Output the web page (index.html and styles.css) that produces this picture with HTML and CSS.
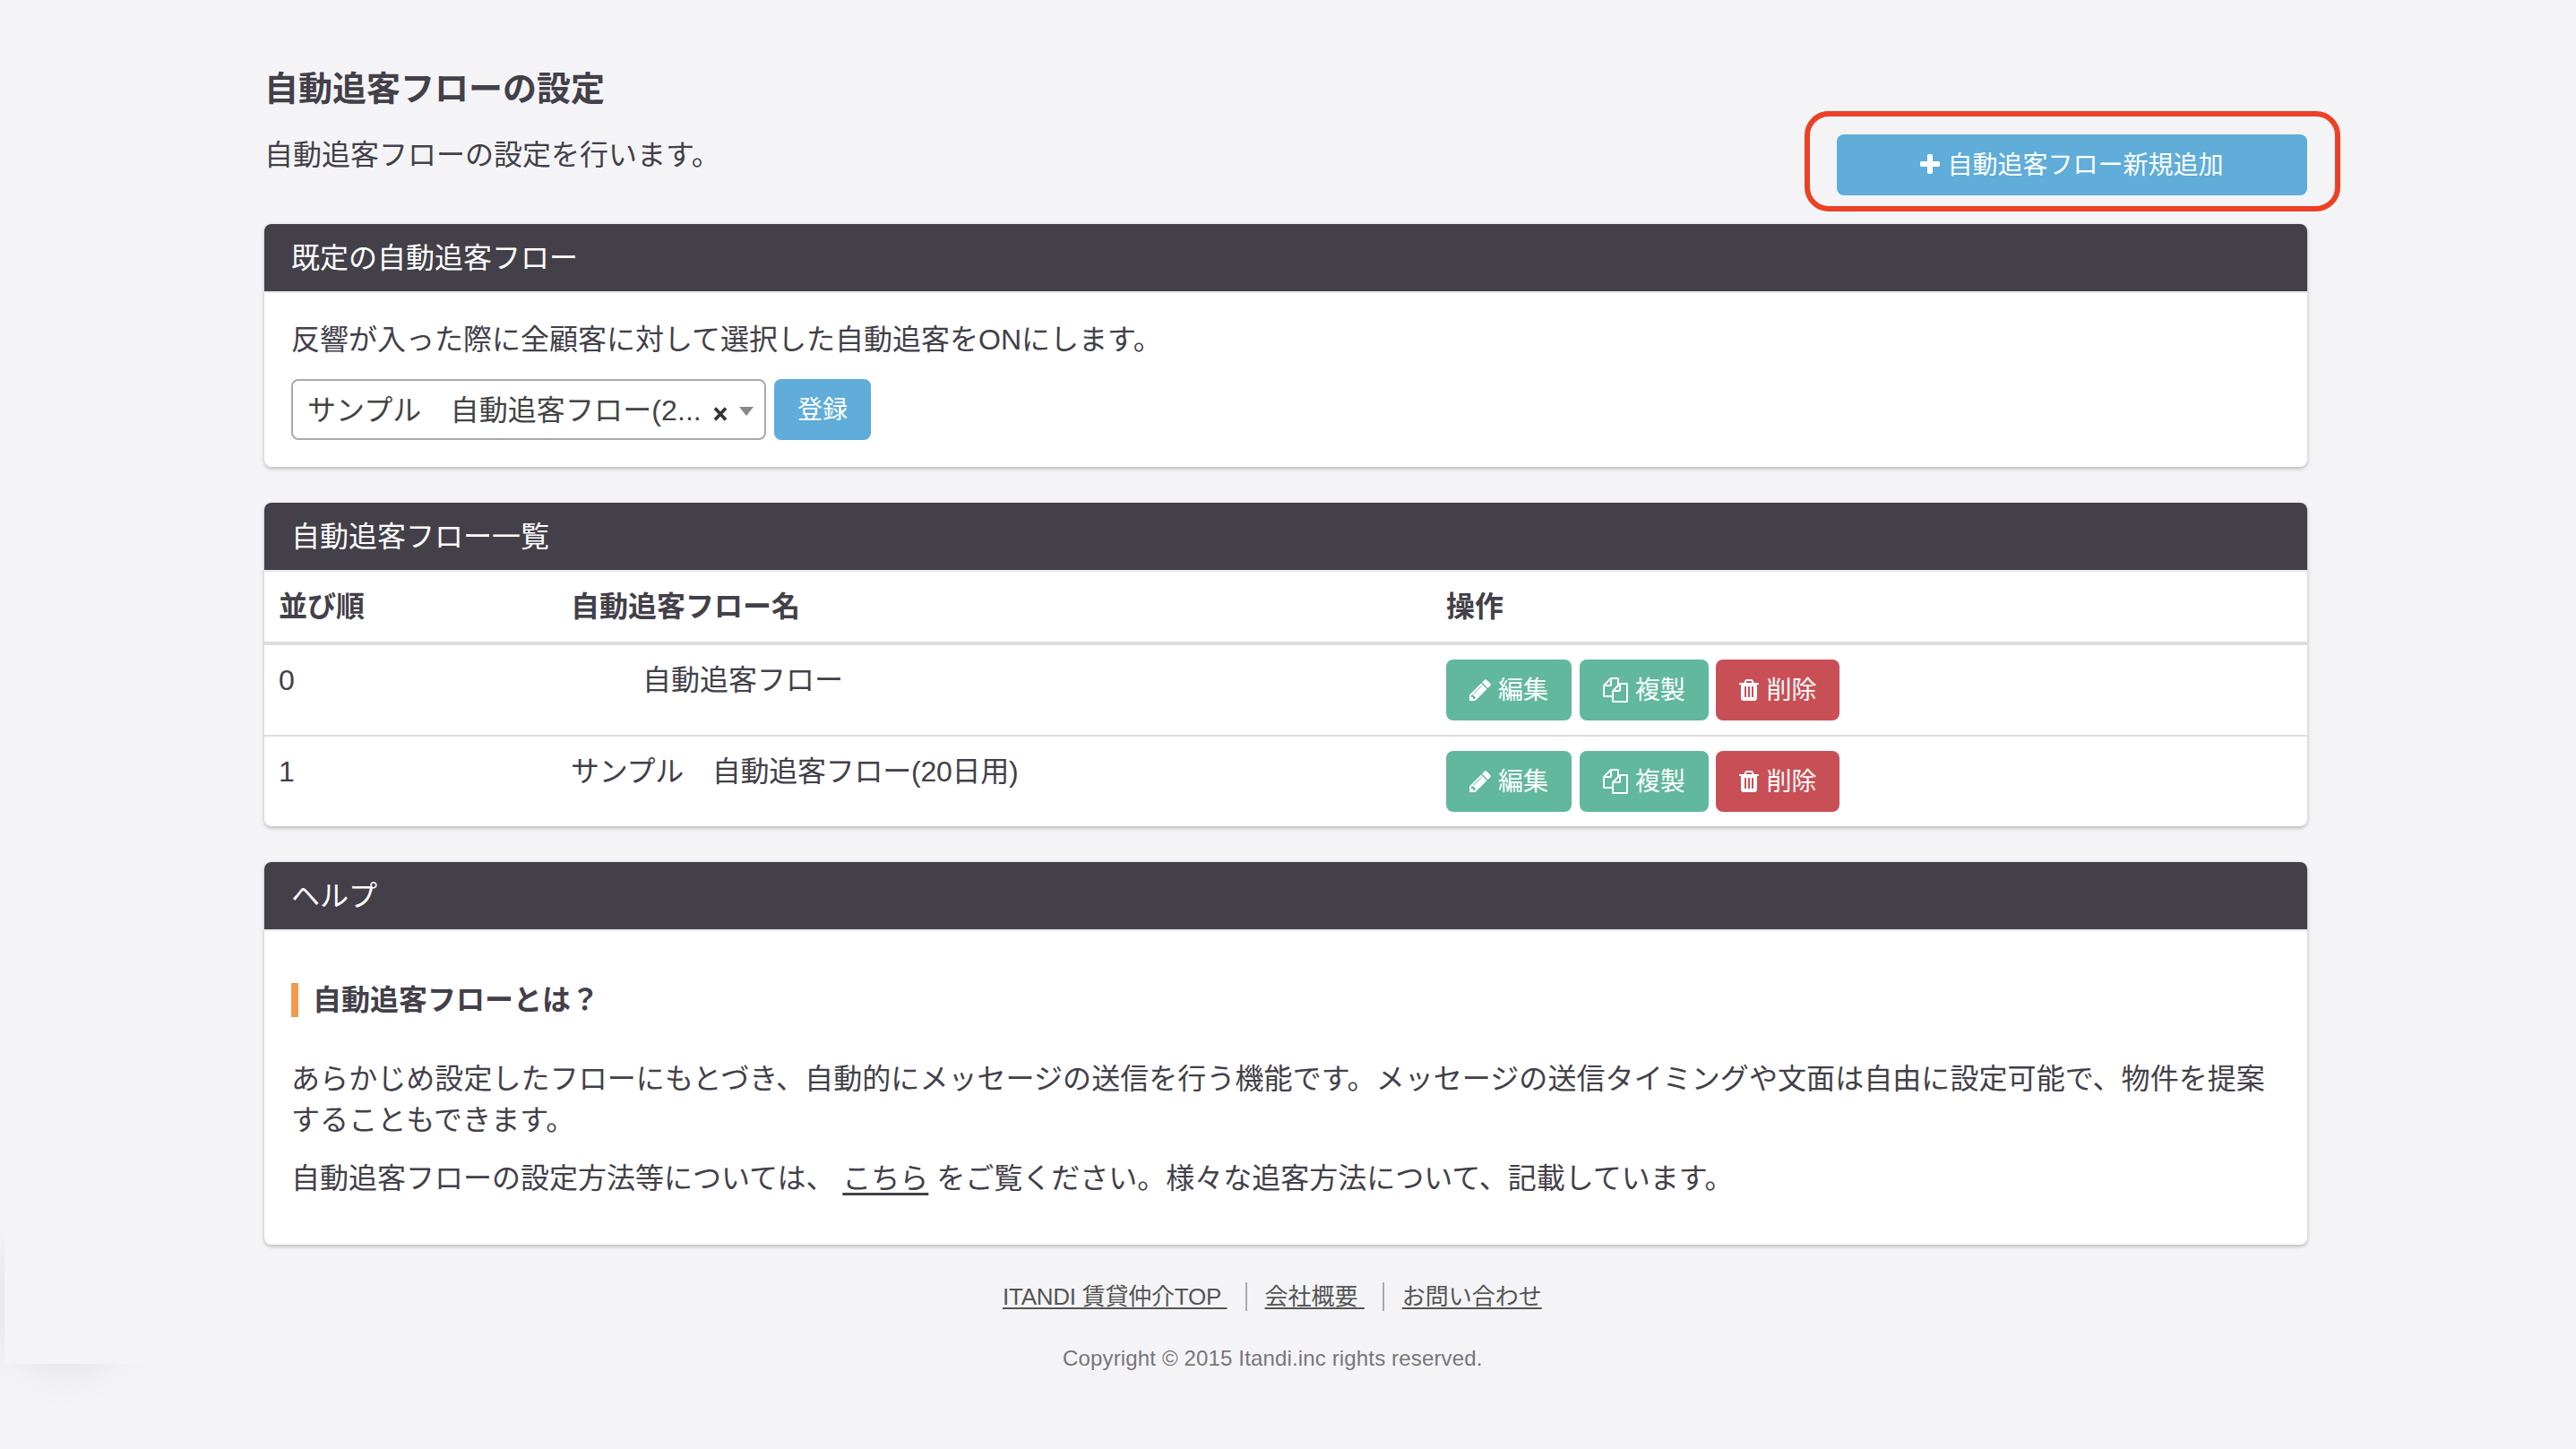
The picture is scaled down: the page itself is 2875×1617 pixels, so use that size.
FILE: index.html
```html
<!DOCTYPE html>
<html lang="ja">
<head>
<meta charset="utf-8">
<title>自動追客フローの設定</title>
<link rel="stylesheet" href="styles.css">
</head>
<body>
<svg class="sprite" aria-hidden="true">
  <symbol id="plus" viewBox="192 0 1408 1792"><path d="M1600 736v192q0 40-28 68t-68 28h-416v416q0 40-28 68t-68 28h-192q-40 0-68-28t-28-68v-416h-416q-40 0-68-28t-28-68v-192q0-40 28-68t68-28h416v-416q0-40 28-68t68-28h192q40 0 68 28t28 68v416h416q40 0 68 28t28 68z"/></symbol>
  <symbol id="pencil" viewBox="128 0 1536 1792"><path d="M491 1536l91-91-235-235-91 91v107h128v128h107zm523-928q0-22-22-22-10 0-17 7l-542 542q-7 7-7 17 0 22 22 22 10 0 17-7l542-542q7-7 7-17zm-54-192l416 416-832 832h-416v-416zm683 96q0 53-37 90l-166 166-416-416 166-165q36-38 90-38 53 0 91 38l235 234q37 39 37 91z"/></symbol>
  <symbol id="copy" viewBox="0 0 1792 1792"><path d="M1696 384q40 0 68 28t28 68v1216q0 40-28 68t-68 28h-960q-40 0-68-28t-28-68v-288h-544q-40 0-68-28t-28-68v-672q0-40 20-88t48-76l408-408q28-28 76-48t88-20h416q40 0 68 28t28 68v328q68-40 128-40h416zm-544 213l-299 299h299v-299zm-640-384l-299 299h299v-299zm196 647l316-316v-416h-384v416q0 40-28 68t-68 28h-416v640h512v-256q0-40 20-88t48-76zm956 804v-1152h-384v416q0 40-28 68t-68 28h-416v640h896z"/></symbol>
  <symbol id="trash" viewBox="192 0 1408 1792"><path d="M704 1376v-704q0-14-9-23t-23-9h-64q-14 0-23 9t-9 23v704q0 14 9 23t23 9h64q14 0 23-9t9-23zm256 0v-704q0-14-9-23t-23-9h-64q-14 0-23 9t-9 23v704q0 14 9 23t23 9h64q14 0 23-9t9-23zm256 0v-704q0-14-9-23t-23-9h-64q-14 0-23 9t-9 23v704q0 14 9 23t23 9h64q14 0 23-9t9-23zm-544-992h448l-48-117q-7-9-17-11h-317q-10 2-17 11zm928 32v64q0 14-9 23t-23 9h-96v948q0 83-47 143.5t-113 60.5h-832q-66 0-113-58.5t-47-141.5v-952h-96q-14 0-23-9t-9-23v-64q0-14 9-23t23-9h309l70-167q15-37 54-63t79-26h320q40 0 79 26t54 63l70 167h309q14 0 23 9t9 23z"/></symbol>
</svg>
<main class="page">
  <header class="page-header">
    <div class="intro">
      <h1 class="title">自動追客フローの設定</h1>
      <p class="lead">自動追客フローの設定を行います。</p>
    </div>
    <div class="add">
      <a class="btn btn-info btn-block"><svg class="icon icon-22"><use href="#plus"/></svg><span class="label">自動追客フロー新規追加</span></a>
      <span class="highlight"></span>
    </div>
  </header>

  <section class="card">
    <h2 class="card-head">既定の自動追客フロー</h2>
    <div class="card-body default-flow">
      <p class="text">反響が入った際に全顧客に対して選択した自動追客をONにします。</p>
      <div class="form">
        <div class="select"><span class="select-value">サンプル　自動追客フロー(2...</span><svg class="clear" viewBox="0 0 16 16"><path d="M2 1.500L14 14.500M14 1.500L2 14.500"/></svg><span class="caret"></span></div>
        <button class="btn btn-info"><span class="label">登録</span></button>
      </div>
    </div>
  </section>

  <section class="card">
    <h2 class="card-head">自動追客フロー一覧</h2>
    <table class="table">
      <thead>
        <tr><th class="col-order">並び順</th><th class="col-name">自動追客フロー名</th><th class="col-actions">操作</th></tr>
      </thead>
      <tbody>
        <tr>
          <td>0</td>
          <td class="indented">自動追客フロー</td>
          <td><div class="actions"><a class="btn btn-success"><svg class="icon icon-24"><use href="#pencil"/></svg><span class="label">編集</span></a><a class="btn btn-success"><svg class="icon icon-28"><use href="#copy"/></svg><span class="label">複製</span></a><a class="btn btn-danger"><svg class="icon icon-22"><use href="#trash"/></svg><span class="label">削除</span></a></div></td>
        </tr>
        <tr>
          <td>1</td>
          <td class="name-long">サンプル　自動追客フロー(20日用)</td>
          <td><div class="actions"><a class="btn btn-success"><svg class="icon icon-24"><use href="#pencil"/></svg><span class="label">編集</span></a><a class="btn btn-success"><svg class="icon icon-28"><use href="#copy"/></svg><span class="label">複製</span></a><a class="btn btn-danger"><svg class="icon icon-22"><use href="#trash"/></svg><span class="label">削除</span></a></div></td>
        </tr>
      </tbody>
    </table>
  </section>

  <section class="card">
    <h2 class="card-head">ヘルプ</h2>
    <div class="card-body help">
      <h3 class="help-title">自動追客フローとは？</h3>
      <p class="text text-wide">あらかじめ設定したフローにもとづき、自動的にメッセージの送信を行う機能です。メッセージの送信タイミングや文面は自由に設定可能で、物件を提案することもできます。</p>
      <p class="text">自動追客フローの設定方法等については、 <a class="link">こちら</a> をご覧ください。様々な追客方法について、記載しています。</p>
    </div>
  </section>

  <footer class="footer">
    <nav class="footer-nav">
      <a class="footer-link link-top">ITANDI 賃貸仲介TOP </a>
      <a class="footer-link">会社概要 </a>
      <a class="footer-link">お問い合わせ</a>
    </nav>
    <p class="copyright">Copyright © 2015 Itandi.inc rights reserved.</p>
  </footer>
</main>
<div class="glow"><div class="glow-cover"></div></div>
</body>
</html>
```
FILE: styles.css
```css
* { box-sizing: border-box; }

body {
  margin: 0;
  height: 1617px;
  overflow: hidden;
  background: #f4f4f6;
  color: #434049;
  font-family: "Liberation Sans", "Noto Sans CJK JP", sans-serif;
  font-size: 32px;
  line-height: 46px;
  text-spacing-trim: space-all;
}

h1, h2, h3, p { margin: 0; }

.sprite { display: none; }

.page { width: 2280px; margin-left: 295px; padding-top: 78px; position: relative; z-index: 1; }

.page-header { display: flex; justify-content: space-between; height: 172px; }
.title { font-size: 38px; line-height: 42px; font-weight: 700; }
.lead { margin-top: 30px; }
.add { position: relative; align-self: flex-start; width: 525px; margin-top: 72px; }
.highlight {
  position: absolute;
  inset: -26px -37px -18px -36px;
  border: 6px solid #eb4126;
  border-radius: 27px;
}

.btn {
  display: inline-flex;
  align-items: center;
  justify-content: center;
  gap: 8px;
  height: 68px;
  padding: 0 26px;
  border: 0;
  border-radius: 8px;
  color: #fff;
  font-family: inherit;
  font-size: 28px;
  line-height: 40px;
  white-space: nowrap;
}
.btn-block { display: flex; }
.btn-info { background: #5fadd8; }
.btn-success { background: #61b89d; }
.btn-danger { background: #c94f56; }
.label { padding-top: 2px; }

.icon { height: 28px; fill: currentColor; }
.icon-22 { width: 22px; }
.icon-24 { width: 24px; }
.icon-28 { width: 28px; }

.card {
  margin-bottom: 40px;
  border-radius: 8px;
  background: #fff;
  box-shadow: 0 2px 4px rgba(0, 0, 0, .25);
}
.card-head {
  height: 77px;
  padding: 15px 30px 0;
  border-bottom: 2px solid #e8e8ee;
  border-radius: 8px 8px 0 0;
  background: #434049;
  background-clip: padding-box;
  color: #fff;
  font-size: 32px;
  line-height: 46px;
  font-weight: 400;
}
.card-body { padding: 30px; }

.default-flow { height: 194px; padding-top: 29px; }
.form { display: flex; gap: 9px; margin-top: 21px; }
.select {
  display: flex;
  align-items: center;
  width: 530px;
  height: 68px;
  padding: 0 12px 0 16px;
  border: 2px solid #aaa;
  border-radius: 8px;
  color: #444;
}
.select-value { flex: 1; padding-top: 2px; letter-spacing: .1px; white-space: nowrap; }
.clear { width: 16px; height: 16px; margin: 9px 13px 0 0; stroke: #333; stroke-width: 3.600; }
.caret { margin-top: 4px; border: 8px solid transparent; border-top: 10px solid #888; border-bottom: 0; }

.table { width: 100%; height: 284px; table-layout: fixed; border-collapse: separate; border-spacing: 0; }
.table th { height: 82px; padding: 16px; border-bottom: 4px solid #ddd; text-align: left; vertical-align: top; font-weight: 700; }
.table td { height: 100px; padding: 16px; vertical-align: top; }
.table tbody tr + tr td { height: 102px; border-top: 2px solid #ddd; }
.col-order { width: 326px; }
.col-name { width: 977px; }
.table .indented { padding-left: 96px; }
.name-long { letter-spacing: -.25px; }
.actions { display: flex; gap: 8.700px; letter-spacing: 0; }

.help { height: 350px; padding-top: 58px; }
.help-title { margin-bottom: 46px; padding-left: 16px; border-left: 8px solid #f29950; font-size: 32px; line-height: 38px; font-weight: 700; }
.help .text + .text { margin-top: 19px; }
.text-wide { letter-spacing: .070px; }
.link { text-decoration: underline; text-decoration-thickness: 3px; text-underline-offset: 5px; }

.footer { padding-top: 2px; }
.footer-nav { display: flex; align-items: center; margin-left: 824px; height: 32px; }
.footer-link {
  color: #555;
  font-size: 26px;
  line-height: 32px;
  white-space: pre;
  text-decoration: underline;
  text-decoration-thickness: 2px;
  text-underline-offset: 3px;
}
.link-top { letter-spacing: -.25px; }
.footer-link + .footer-link { margin-left: 20px; padding-left: 20px; border-left: 2px solid #aaa; }
.copyright { margin: 36px 0 0 891px; color: #77757c; font-size: 24px; line-height: 34px; letter-spacing: .150px; }

/* faint glow in the lower left corner of the window */
.glow {
  position: absolute;
  left: 0;
  top: 1330px;
  width: 200px;
  height: 250px;
  background: radial-gradient(circle at 72px 122px, #d8d8db 0, #e9e9eb 70px, #f1f1f3 95px, #f4f4f6 118px);
}
.glow-cover { margin: 0 0 0 5px; width: 195px; height: 192px; background: #f4f4f6; }
```
